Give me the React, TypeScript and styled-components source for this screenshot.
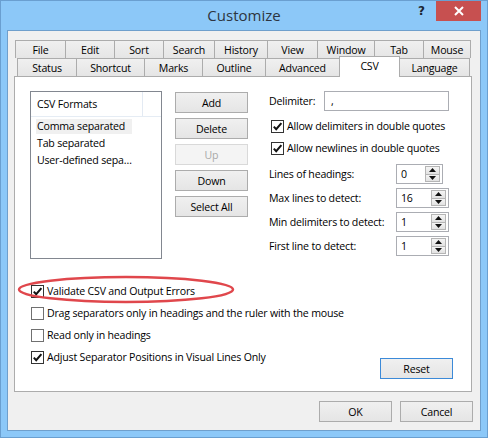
import React from "react";
import styled, { createGlobalStyle } from "styled-components";

const GlobalStyle = createGlobalStyle`
  html, body { margin: 0; padding: 0; background: #fff; }
  body {
    font-family: "Open Sans", "Noto Sans", sans-serif;
    font-size: 10.6px;
    letter-spacing: -0.2px;
    color: #000;
  }
  * { box-sizing: border-box; }
`;

const Window = styled.div`
  width: 488px;
  height: 438px;
  background: #8cc8f8;
  border: 1px solid #6a9fd0;
  display: flex;
  flex-direction: column;
`;

const TitleBar = styled.div`
  height: 29px;
  display: grid;
  grid-template-columns: 1fr auto 1fr;
  align-items: start;
`;

const Title = styled.div`
  grid-column: 2;
  align-self: center;
  font-size: 15px;
  letter-spacing: 0;
  color: #2d3540;
  padding-bottom: 1px;
`;

const Controls = styled.div`
  grid-column: 3;
  justify-self: end;
  display: flex;
  margin-right: 6px;
`;

const HelpButton = styled.div`
  width: 26px;
  height: 20px;
  display: flex;
  align-items: center;
  justify-content: center;
  font-family: "DejaVu Sans", sans-serif;
  font-weight: bold;
  font-size: 12px;
  color: #1c2530;
  padding-right: 3px;
`;

const CloseButton = styled.div`
  width: 45px;
  height: 20px;
  background: #c75050;
  display: flex;
  align-items: center;
  justify-content: center;
`;

const Client = styled.div`
  flex: 1;
  margin: 0 6px 6px 6px;
  border: 1px solid #6f9fcc;
  background: #f0f0f0;
  padding-top: 9px;
  display: flex;
  flex-direction: column;
`;

const TabArea = styled.div`
  padding-left: 6px;
  display: flex;
  flex-direction: column;
`;

const TabRow = styled.div<{ $indent: number; $front?: boolean }>`
  display: flex;
  align-items: flex-end;
  height: 18px;
  margin-left: ${(p) => p.$indent}px;
  position: relative;
  z-index: ${(p) => (p.$front ? 2 : 1)};
`;

const Tab = styled.div<{ $w: number; $active?: boolean }>`
  width: ${(p) => p.$w}px;
  height: ${(p) => (p.$active ? 21 : 18)}px;
  margin-right: -1px;
  margin-bottom: ${(p) => (p.$active ? -1 : 0)}px;
  border: 1px solid #acacac;
  border-bottom: none;
  background: ${(p) => (p.$active ? "#fff" : "linear-gradient(#f0f0f0, #e5e5e5)")};
  display: flex;
  align-items: center;
  justify-content: center;
  padding-bottom: ${(p) => (p.$active ? 2 : 0)}px;
  position: relative;
  z-index: ${(p) => (p.$active ? 1 : 0)};
  white-space: nowrap;
`;

const Panel = styled.div`
  width: 458px;
  height: 316px;
  border: 1px solid #acacac;
  background: #fff;
  position: relative;
  display: flex;
  flex-direction: column;
`;

const TopSection = styled.div`
  display: flex;
  align-items: flex-start;
  padding: 14px 0 0 15px;
`;

const ListBox = styled.div`
  width: 132px;
  height: 168px;
  border: 1px solid #828790;
  background: #fff;
  display: flex;
  flex-direction: column;
`;

const ListHeader = styled.div`
  height: 25px;
  display: flex;
  border-bottom: 1px solid #e5ecf4;
`;

const HeaderCell = styled.div<{ $w: number }>`
  width: ${(p) => p.$w}px;
  padding-left: 6px;
  display: flex;
  align-items: center;
  border-right: 1px solid #e3eaf3;
`;

const ListItems = styled.div`
  padding-top: 1px;
  display: flex;
  flex-direction: column;
`;

const ListItem = styled.div`
  height: 17px;
  padding: 1px 0 1px 5px;
  display: flex;
`;

const ItemLabel = styled.span<{ $selected?: boolean }>`
  height: 15px;
  line-height: 15px;
  padding: 0 7px 0 1px;
  background: ${(p) => (p.$selected ? "#f0f0f0" : "transparent")};
  white-space: nowrap;
`;

const ButtonColumn = styled.div`
  margin-left: 13px;
  margin-top: 1px;
  display: flex;
  flex-direction: column;
  gap: 5px;
`;

const Button = styled.button<{ $default?: boolean }>`
  width: 73px;
  height: 21px;
  padding: 0;
  border: 1px solid ${(p) => (p.$default ? "#3c8ad8" : "#acacac")};
  background: linear-gradient(#f0f0f0, #e5e5e5);
  font: inherit;
  letter-spacing: inherit;
  color: #000;
  &:disabled {
    color: #a8a8a8;
    border-color: #d9d9d9;
    background: #f4f4f4;
  }
`;

const RightColumn = styled.div`
  margin-left: 21px;
  display: flex;
  flex-direction: column;
`;

const FieldRow = styled.div<{ $h: number }>`
  height: ${(p) => p.$h}px;
  display: flex;
  align-items: center;
`;

const FieldLabel = styled.span<{ $w: number }>`
  width: ${(p) => p.$w}px;
  white-space: nowrap;
`;

const TextInput = styled.div`
  width: 125px;
  height: 20px;
  border: 1px solid #abadb3;
  padding-left: 6px;
  display: flex;
  align-items: center;
`;

const CheckRow = styled.label<{ $indent?: number }>`
  height: 22px;
  display: flex;
  align-items: center;
  gap: 3px;
  padding-left: ${(p) => p.$indent ?? 0}px;
  white-space: nowrap;
`;

const Box = styled.span<{ $checked?: boolean }>`
  width: 13px;
  height: 13px;
  flex-shrink: 0;
  border: 1px solid ${(p) => (p.$checked ? "#333" : "#707070")};
  background: #fff;
  display: inline-flex;
  align-items: center;
  justify-content: center;
`;

const Spinner = styled.div<{ $w: number }>`
  width: ${(p) => p.$w}px;
  height: 20px;
  border: 1px solid #abadb3;
  display: flex;
  align-items: center;
`;

const SpinValue = styled.span`
  flex: 1;
  padding-left: 4px;
`;

const SpinButtons = styled.div`
  width: 15px;
  height: 16px;
  margin-right: 2px;
  display: flex;
  flex-direction: column;
`;

const SpinButton = styled.div`
  flex: 1;
  border: 1px solid #b5b5b5;
  background: linear-gradient(#f4f4f4, #e2e2e2);
  display: flex;
  align-items: center;
  justify-content: center;
  & + & { border-top: none; }
`;

const BottomSection = styled.div`
  margin-top: 21px;
  display: flex;
  align-items: flex-end;
  justify-content: space-between;
`;

const CheckColumn = styled.div`
  display: flex;
  flex-direction: column;
  padding-bottom: 11px;
`;

const ResetWrap = styled.div`
  margin-right: 18px;
`;

const Highlight = styled.svg`
  position: absolute;
  left: 2px;
  top: 198px;
  pointer-events: none;
`;

const Footer = styled.div`
  display: flex;
  justify-content: flex-end;
  gap: 8px;
  padding: 9px 7px 0 0;
`;

const Check = ({ checked }: { checked?: boolean }) => (
  <Box $checked={checked}>
    {checked && (
      <svg width="11" height="11" viewBox="0 0 11 11">
        <path d="M1.8 5.6 L4.2 8.2 L9.4 2.2" fill="none" stroke="#111" strokeWidth="2" />
      </svg>
    )}
  </Box>
);

const Arrow = ({ up }: { up?: boolean }) => (
  <svg width="7" height="4" viewBox="0 0 7 4">
    <path d={up ? "M0 4 L3.5 0 L7 4 Z" : "M0 0 L7 0 L3.5 4 Z"} fill="#111" />
  </svg>
);

const SpinField = ({ value, width }: { value: string; width: number }) => (
  <Spinner $w={width}>
    <SpinValue>{value}</SpinValue>
    <SpinButtons>
      <SpinButton>
        <Arrow up />
      </SpinButton>
      <SpinButton>
        <Arrow />
      </SpinButton>
    </SpinButtons>
  </Spinner>
);

const backTabs: [string, number][] = [
  ["File", 51],
  ["Edit", 50],
  ["Sort", 50],
  ["Search", 52],
  ["History", 54],
  ["View", 51],
  ["Window", 58],
  ["Tab", 50],
  ["Mouse", 48],
];

const frontTabs: [string, number][] = [
  ["Status", 60],
  ["Shortcut", 69],
  ["Marks", 59],
  ["Outline", 64],
  ["Advanced", 75],
  ["CSV", 61],
  ["Language", 71],
];

const spins: [string, string, number][] = [
  ["Lines of headings:", "0", 47],
  ["Max lines to detect:", "16", 53],
  ["Min delimiters to detect:", "1", 53],
  ["First line to detect:", "1", 53],
];

export default function App() {
  return (
    <>
      <GlobalStyle />
      <Window>
        <TitleBar>
          <Title>Customize</Title>
          <Controls>
            <HelpButton>?</HelpButton>
            <CloseButton>
              <svg width="10" height="10" viewBox="0 0 10 10">
                <path d="M1 1 L9 9 M9 1 L1 9" stroke="#fff" strokeWidth="2" />
              </svg>
            </CloseButton>
          </Controls>
        </TitleBar>
        <Client>
          <TabArea>
            <TabRow $indent={1}>
              {backTabs.map(([t, w]) => (
                <Tab key={t} $w={w}>
                  {t}
                </Tab>
              ))}
            </TabRow>
            <TabRow $indent={3} $front>
              {frontTabs.map(([t, w]) => (
                <Tab key={t} $w={w} $active={t === "CSV"}>
                  {t}
                </Tab>
              ))}
            </TabRow>
            <Panel>
              <TopSection>
                <ListBox>
                  <ListHeader>
                    <HeaderCell $w={112}>CSV Formats</HeaderCell>
                  </ListHeader>
                  <ListItems>
                    <ListItem>
                      <ItemLabel $selected>Comma separated</ItemLabel>
                    </ListItem>
                    <ListItem>
                      <ItemLabel>Tab separated</ItemLabel>
                    </ListItem>
                    <ListItem>
                      <ItemLabel>User-defined sepa…</ItemLabel>
                    </ListItem>
                  </ListItems>
                </ListBox>
                <ButtonColumn>
                  <Button>Add</Button>
                  <Button>Delete</Button>
                  <Button disabled>Up</Button>
                  <Button>Down</Button>
                  <Button>Select All</Button>
                </ButtonColumn>
                <RightColumn>
                  <FieldRow $h={20}>
                    <FieldLabel $w={55}>Delimiter:</FieldLabel>
                    <TextInput>,</TextInput>
                  </FieldRow>
                  <FieldRow $h={4} />
                  <CheckRow $indent={2}>
                    <Check checked />
                    Allow delimiters in double quotes
                  </CheckRow>
                  <CheckRow $indent={2}>
                    <Check checked />
                    Allow newlines in double quotes
                  </CheckRow>
                  <FieldRow $h={3} />
                  {spins.map(([label, v, w]) => (
                    <FieldRow key={label} $h={24}>
                      <FieldLabel $w={127}>{label}</FieldLabel>
                      <SpinField value={v} width={w} />
                    </FieldRow>
                  ))}
                </RightColumn>
              </TopSection>
              <BottomSection>
                <CheckColumn>
                  <CheckRow $indent={16}>
                    <Check checked />
                    Validate CSV and Output Errors
                  </CheckRow>
                  <CheckRow $indent={16}>
                    <Check />
                    Drag separators only in headings and the ruler with the mouse
                  </CheckRow>
                  <CheckRow $indent={16}>
                    <Check />
                    Read only in headings
                  </CheckRow>
                  <CheckRow $indent={16}>
                    <Check checked />
                    Adjust Separator Positions in Visual Lines Only
                  </CheckRow>
                </CheckColumn>
                <ResetWrap>
                  <Button $default>Reset</Button>
                </ResetWrap>
              </BottomSection>
              <Highlight width="218" height="29" viewBox="0 0 218 29">
                <ellipse cx="109" cy="14.5" rx="107" ry="12.5" fill="none" stroke="#e0474c" strokeWidth="2.5" />
              </Highlight>
            </Panel>
          </TabArea>
          <Footer>
            <Button>OK</Button>
            <Button>Cancel</Button>
          </Footer>
        </Client>
      </Window>
    </>
  );
}
